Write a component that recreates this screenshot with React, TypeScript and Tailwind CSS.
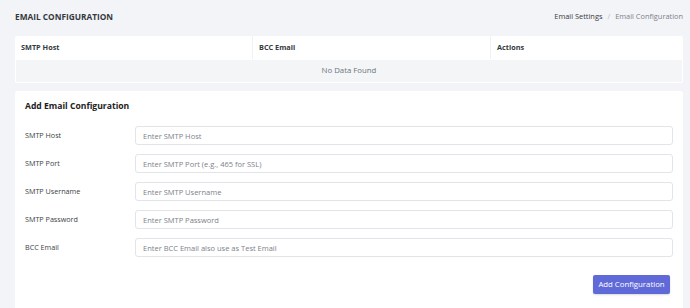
const fields = [
  { label: "SMTP Host", placeholder: "Enter SMTP Host" },
  { label: "SMTP Port", placeholder: "Enter SMTP Port (e.g., 465 for SSL)" },
  { label: "SMTP Username", placeholder: "Enter SMTP Username" },
  { label: "SMTP Password", placeholder: "Enter SMTP Password" },
  { label: "BCC Email", placeholder: "Enter BCC Email also use as Test Email" },
];

export default function App() {
  return (
    <div
      className="w-[690px] h-[308px] overflow-hidden bg-[#f3f4f8] pl-[15px] pr-[7px] text-[#333]"
      style={{ fontFamily: '"Open Sans", "Liberation Sans", sans-serif' }}
    >
      <div className="flex items-center justify-between h-[36px] pb-[2px]">
        <h1 className="text-[8.3px] font-bold text-[#343a40]">EMAIL CONFIGURATION</h1>
        <div className="flex items-center gap-[5px] text-[7.4px]">
          <span className="text-[#343a40] font-medium">Email Settings</span>
          <span className="text-[#b5b9c0]">/</span>
          <span className="text-[#7c818a]">Email Configuration</span>
        </div>
      </div>

      <div className="bg-white rounded-[2px] overflow-hidden">
        <div className="grid grid-cols-[238px_238px_1fr] h-[23px] text-[7.3px] font-bold text-[#343a40]">
          <div className="flex items-center px-[6px] border-r border-[#f1f2f4]">SMTP Host</div>
          <div className="flex items-center px-[6px] border-r border-[#f1f2f4]">BCC Email</div>
          <div className="flex items-center px-[6px]">Actions</div>
        </div>
        <div className="h-[24px] bg-[#f4f5f7] border border-white flex items-center justify-center text-[7.8px] text-[#6c757d]">
          No Data Found
        </div>
      </div>

      <div className="mt-[8px] bg-white rounded-[3px] px-[10px] pt-[9px] h-[230px]">
        <h2 className="text-[8.6px] font-bold text-[#222] mb-[14px] h-[12px] flex items-center">Add Email Configuration</h2>
        <div className="flex flex-col gap-[9px]">
          {fields.map((f) => (
            <div key={f.label} className="flex items-center">
              <label className="w-[110px] text-[7.2px] font-medium text-[#3a3f45]">{f.label}</label>
              <input
                placeholder={f.placeholder}
                className="flex-1 h-[19px] border border-[#e2e4e8] rounded-[3px] px-[7px] text-[7.5px] placeholder:text-[#7c818a] outline-none"
              />
            </div>
          ))}
        </div>
        <div className="flex justify-end mt-[18px] pr-[3px]">
          <button className="h-[19px] w-[77px] bg-[#5f6ad8] text-white text-[7.8px] rounded-[2px] shadow-[0_1px_2px_rgba(0,0,0,0.15)]">
            Add Configuration
          </button>
        </div>
      </div>
    </div>
  );
}
